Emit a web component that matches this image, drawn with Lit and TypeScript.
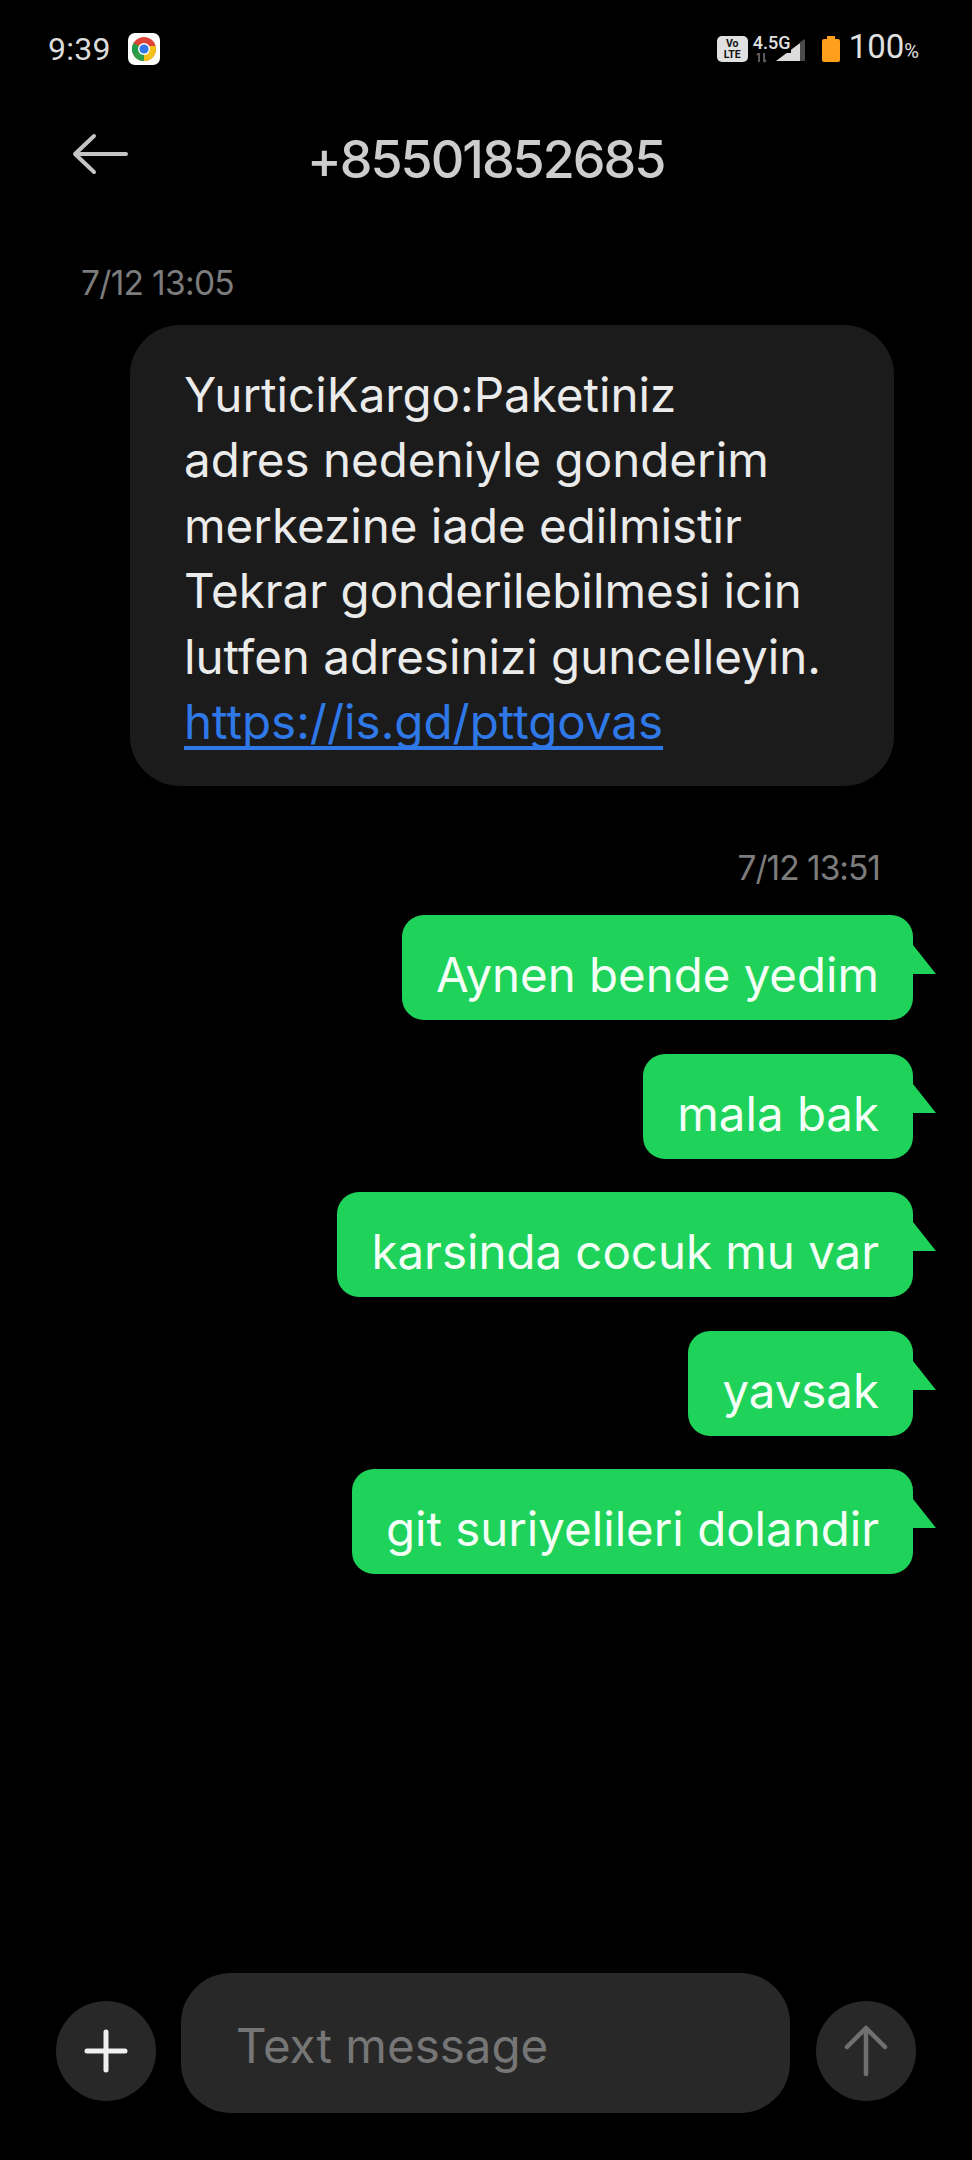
import { LitElement, html, css } from "lit";
import { customElement } from "lit/decorators.js";

const sent = ["Aynen bende yedim", "mala bak", "karsinda cocuk mu var", "yavsak", "git suriyelileri dolandir"];

@customElement("app-root")
export class AppRoot extends LitElement {
  static styles = css`
    :host { display: block; width: 972px; height: 2160px; background: #000; font-family: Inter, Roboto, sans-serif; overflow: hidden; }
    .page { display: flex; flex-direction: column; height: 2160px; box-sizing: border-box; }
    .status { display: flex; align-items: center; height: 34px; margin-top: 32px; padding: 0 53px 0 48px; color: #dcdcdc; }
    .time { font-family: Roboto, sans-serif; font-size: 32px; line-height: 34px; width: 80px; letter-spacing: 0.3px; }
    .chrome { width: 32px; height: 32px; display: block; }
    .status-right { margin-left: auto; display: flex; align-items: center; }
    .volte { width: 31px; height: 26px; border-radius: 5px; background: #e0e0e0; color: #111; font-family: Roboto, sans-serif; font-size: 10.5px; line-height: 11px; font-weight: 700; text-align: center; padding-top: 2px; box-sizing: border-box; margin-right: 5px; }
    .net { width: 53px; height: 28px; position: relative; margin-right: 16px; }
    .net svg { width: 53px; height: 28px; display: block; }
    .net span { position: absolute; left: 0; top: -2px; font-family: Roboto, sans-serif; font-size: 18px; line-height: 20px; font-weight: 500; color: #e0e0e0; background: #000; padding-right: 1px; }
    .batt { width: 18px; height: 26px; display: block; margin-right: 9px; }
    .pct { font-family: Roboto, sans-serif; font-size: 33px; line-height: 34px; color: #e0e0e0; }
    .pct small { font-size: 20px; }
    .header { display: flex; align-items: center; height: 66px; margin-top: 61px; padding-left: 70px; }
    .back { width: 58px; height: 42px; display: block; margin-bottom: 12px; }
    .title { margin-left: 179px; font-size: 52px; font-weight: 500; line-height: 66px; color: #cdcdcd; letter-spacing: -2px; }
    .stamp { font-size: 33.5px; line-height: 40px; color: #7c7c7c; letter-spacing: -0.7px; }
    .stamp.in { margin: 70px 0 0 81px; }
    .stamp.out { margin: 62px 92px 0 0; text-align: right; letter-spacing: -1px; }
    .bubble-in { margin: 22px 0 0 130px; width: 764px; height: 461px; box-sizing: border-box; padding: 37px 0 0 54px; background: #1b1b1b; border-radius: 50px; color: #ebebeb; font-size: 47.5px; line-height: 65.4px; }
    .bubble-in a { color: #2f78e8; text-decoration: underline; text-decoration-thickness: 4px; text-decoration-skip-ink: none; text-underline-offset: 7px; }
    .sent { display: flex; flex-direction: column; align-items: flex-end; gap: 33.5px; margin: 27px 59px 0 0; }
    .green { position: relative; height: 105px; box-sizing: border-box; padding: 14px 34px 0; display: flex; align-items: center; background: #1fd35a; border-radius: 22px; color: #f4fff7; font-size: 47.4px; white-space: nowrap; }
    .tail { position: absolute; left: 100%; top: 30px; width: 23px; height: 29px; display: block; }
    .composer { margin-top: auto; margin-bottom: 47px; padding: 0 56px; display: flex; align-items: flex-end; }
    .circle { width: 100px; height: 100px; border-radius: 50%; background: #282828; display: flex; align-items: center; justify-content: center; flex: none; margin-bottom: 12px; }
    .circle svg { display: block; }
    .input { width: 609px; height: 140px; margin: 0 26px 0 25px; box-sizing: border-box; padding: 4px 0 0 55px; display: flex; align-items: center; background: #282828; border-radius: 50px; font-size: 47.5px; color: #767676; }
  `;

  render() {
    return html`<div class="page">
      <div class="status">
        <span class="time">9:39</span>
        <svg class="chrome" viewBox="0 0 32 32">
          <rect width="32" height="32" rx="7" fill="#fff"/>
          <circle cx="16" cy="16" r="12" fill="#db4437"/>
          <path d="M16 16 L5.6 22 A12 12 0 0 1 5.6 10 Z" fill="#1e9e4a"/>
          <path d="M16 16 L5.6 22 A12 12 0 0 0 16 28 Z" fill="#2f9e4a"/>
          <path d="M16 16 L16 28 A12 12 0 0 0 27.6 13 L16 13 Z" fill="#f2c21a"/>
          <circle cx="16" cy="16" r="6" fill="#fff"/>
          <circle cx="16" cy="16" r="4.6" fill="#3478e5"/>
        </svg>
        <div class="status-right">
          <div class="volte">Vo<br />LTE</div>
          <div class="net">
            <svg viewBox="0 0 53 28">
              <path d="M6 18v9M4 20l2-2M11 18v9M13 25l-2 2" stroke="#5a5a5a" stroke-width="2" fill="none"/>
              <path d="M23 26 L47 26 L47 8 Z" fill="#dcdcdc"/>
              <path d="M47 7 L52 4 L52 26 L47 26 Z" fill="#4a4a4a"/>
            </svg>
            <span>4.5G</span>
          </div>
          <svg class="batt" viewBox="0 0 18 26">
            <path d="M5 0h8v3h3a2 2 0 0 1 2 2v19a2 2 0 0 1-2 2H2a2 2 0 0 1-2-2V5a2 2 0 0 1 2-2h3z" fill="#ff9f1c"/>
          </svg>
          <span class="pct">100<small>%</small></span>
        </div>
      </div>
      <div class="header">
        <svg class="back" viewBox="0 0 58 42" fill="none" stroke="#c4c4c4" stroke-width="4" stroke-linecap="round" stroke-linejoin="round">
          <path d="M5 21H56M24 3L5 21L24 39"/>
        </svg>
        <span class="title">+85501852685</span>
      </div>
      <div class="stamp in">7/12 13:05</div>
      <div class="bubble-in">YurticiKargo:Paketiniz<br />adres nedeniyle gonderim<br />merkezine iade edilmistir<br />Tekrar gonderilebilmesi icin<br />lutfen adresinizi guncelleyin.<br /><a>https://is.gd/pttgovas</a></div>
      <div class="stamp out">7/12 13:51</div>
      <div class="sent">
        ${sent.map((t) => html`<div class="green">${t}<svg class="tail" viewBox="0 0 23 29"><path d="M0 0L23 29H0Z" fill="#1fd35a"/></svg></div>`)}
      </div>
      <div class="composer">
        <div class="circle"><svg width="44" height="44" viewBox="0 0 44 44" stroke="#f0f0f0" stroke-width="5" stroke-linecap="round"><path d="M22 3V41M3 22H41"/></svg></div>
        <div class="input">Text message</div>
        <div class="circle"><svg width="44" height="52" viewBox="0 0 44 52" fill="none" stroke="#707070" stroke-width="4.5" stroke-linecap="round" stroke-linejoin="round"><path d="M22 3V49M3 22L22 3L41 22"/></svg></div>
      </div>
    </div>`;
  }
}
